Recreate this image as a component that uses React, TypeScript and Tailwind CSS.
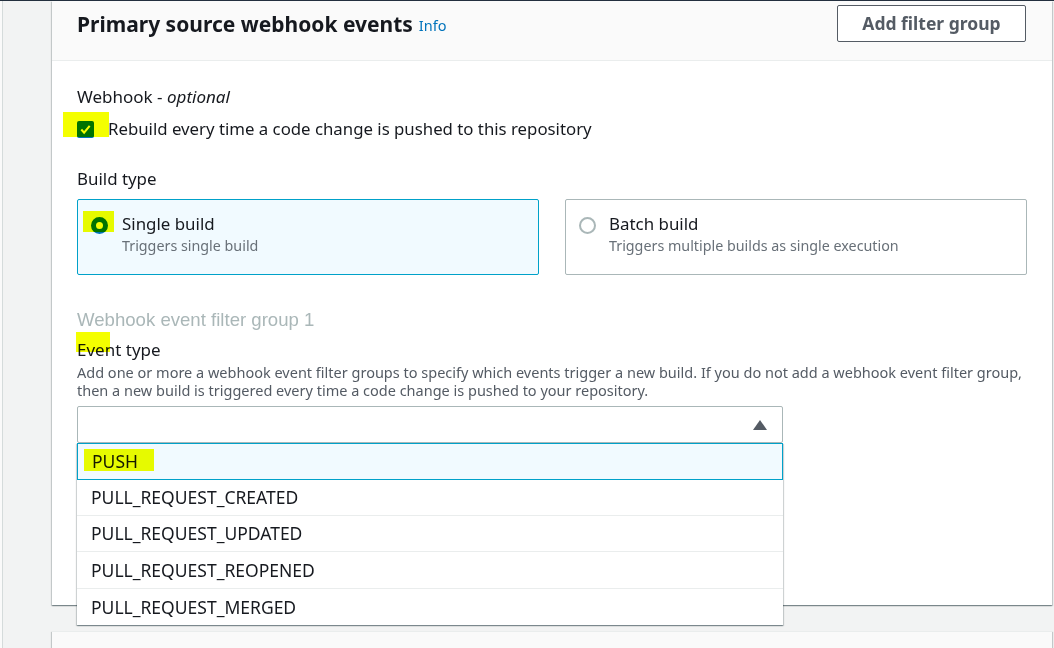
import React from "react";

const shadow =
  "shadow-[0_1px_1px_0_rgba(0,28,36,0.3),1px_1px_1px_0_rgba(0,28,36,0.15),-1px_1px_1px_0_rgba(0,28,36,0.15)]";

function Highlight({ className }: { className: string }) {
  return <div className={`absolute bg-[#f4ff00] mix-blend-multiply pointer-events-none ${className}`} />;
}

export default function App() {
  const options = ["PULL_REQUEST_CREATED", "PULL_REQUEST_UPDATED", "PULL_REQUEST_REOPENED", "PULL_REQUEST_MERGED"];
  const heights = ["h-[35px]", "h-[36px] border-t border-[#eaeded]", "h-[37px] border-t border-[#eaeded]", "h-[37px] border-t border-[#eaeded]"];
  return (
    <div className="w-[1054px] h-[648px] overflow-hidden bg-[#f2f3f3] border-t border-[#232f3e] flex font-['Noto_Sans',sans-serif] text-[#16191f]">
      <div className="w-[2px] shrink-0 bg-[#fafafa]" />
      <div className="w-px shrink-0 bg-[#d5dbdb]" />
      <div className="flex-1 flex flex-col pl-[49px] pr-[2px]">
        <div className={`relative h-[604px] shrink-0 bg-white ${shadow}`}>
          {/* Header */}
          <div className="h-[60px] pt-[4px] bg-[#fafafa] border-b border-[#eaeded] pl-[25px] pr-[26px] flex items-start justify-between">
            <div className="h-[37px] flex items-center">
              <h2 className="text-[21px] leading-[28px] font-bold">Primary source webhook events</h2>
              <span className="ml-[6px] text-[14.5px] leading-[28px] text-[#0073bb] pt-[2px]">Info</span>
            </div>
            <button className="h-[37px] w-[189px] border border-[#545b64] rounded-[2px] bg-white text-[17.5px] font-bold text-[#545b64] flex items-center justify-center">
              Add filter group
            </button>
          </div>

          {/* Body */}
          <div className="px-[25px] pt-[25px]">
            <div className="text-[17px] leading-[22px]">
              Webhook - <span className="italic">optional</span>
            </div>
            <div className="mt-[10px] h-[22px] flex items-center">
              <div className="relative w-[17px] h-[17px] shrink-0 mt-[1px]">
                <div className="w-[17px] h-[17px] rounded-[2px] bg-[#0073bb] flex items-center justify-center">
                  <svg width="13" height="13" viewBox="0 0 14 14">
                    <polyline points="2.5,7 5.5,10.5 11.5,3" fill="none" stroke="white" strokeWidth="2.2" />
                  </svg>
                </div>
                <Highlight className="-left-[14px] -top-[9px] w-[46px] h-[25px]" />
              </div>
              <span className="ml-[14px] text-[16.8px] leading-[22px]">
                Rebuild every time a code change is pushed to this repository
              </span>
            </div>

            <div className="mt-[28px] text-[16.9px] leading-[22px]">Build type</div>
            <div className="mt-[9px] flex gap-[26px]">
              <div className="flex-1 h-[76px] border border-[#00a1c9] bg-[#f1faff] rounded-[2px] pl-[13px] pt-[13px] flex items-start">
                <div className="relative mt-[4px] w-[17px] h-[17px] shrink-0">
                  <div className="w-[17px] h-[17px] rounded-full border-[5px] border-[#0073bb] bg-white" />
                  <Highlight className="-left-[8px] -top-[6px] w-[31px] h-[21px]" />
                </div>
                <div className="ml-[14px]">
                  <div className="text-[16.9px] leading-[22px]">Single build</div>
                  <div className="mt-[1px] text-[14.3px] leading-[20px] text-[#687078]">Triggers single build</div>
                </div>
              </div>
              <div className="flex-1 h-[76px] border border-[#aab7b8] bg-white rounded-[2px] pl-[13px] pt-[13px] flex items-start">
                <div className="mt-[4px] w-[17px] h-[17px] shrink-0 rounded-full border-2 border-[#aab7b8] bg-white" />
                <div className="ml-[13px]">
                  <div className="text-[16.9px] leading-[22px]">Batch build</div>
                  <div className="mt-[1px] text-[14.3px] leading-[20px] text-[#687078]">Triggers multiple builds as single execution</div>
                </div>
              </div>
            </div>

            <div className="mt-[34px] text-[18.6px] leading-[22px] text-[#aab7b8] font-['Liberation_Sans',Arial,sans-serif]">
              Webhook event filter group 1
            </div>
            <div className="relative mt-[8px] text-[17px] leading-[22px] w-fit">
              Event type
              <Highlight className="-left-[1px] -top-[7px] w-[34px] h-[20px]" />
            </div>
            <div className="mt-[2px] text-[14.5px] leading-[18px] text-[#545b64]">
              Add one or more a webhook event filter groups to specify which events trigger a new build. If you do not add a webhook event filter group, then a new build is triggered every time a code change is pushed to your repository.
            </div>

            <div className="relative mt-[7px] w-[706px]">
              <div className="h-[37px] border border-[#aab7b8] rounded-[2px] bg-white flex items-center justify-end pr-[15px]">
                <svg width="14" height="10" viewBox="0 0 14 10">
                  <polygon points="7,0 14,10 0,10" fill="#545b64" />
                </svg>
              </div>
              <div className={`absolute left-0 top-[37px] w-full bg-white z-10 ${shadow}`}>
                <div className="relative h-[37px] border border-[#00a1c9] bg-[#f1faff] pl-[14px] flex items-center text-[17.5px]">
                  PUSH
                  <Highlight className="left-[6px] top-[5px] w-[70px] h-[22px]" />
                </div>
                {options.map((o, i) => (
                  <div key={o} className={`${heights[i]} pl-[14px] flex items-center text-[17.5px]`}>
                    {o}
                  </div>
                ))}
              </div>
            </div>
          </div>
        </div>
        <div className={`mt-[26px] flex-1 bg-[#fafafa] border-t border-[#eaeded] ${shadow}`} />
      </div>
    </div>
  );
}
